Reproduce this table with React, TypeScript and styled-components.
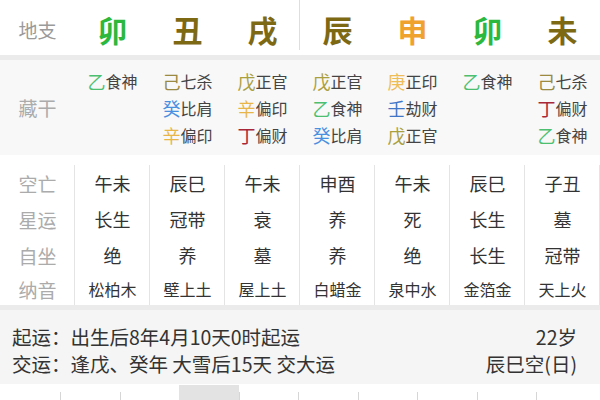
import React from 'react';
import styled, { createGlobalStyle } from 'styled-components';

const Global = createGlobalStyle`
  html, body { margin: 0; padding: 0; background: #fff; }
  body { font-family: "Noto Sans CJK SC", "Noto Sans", sans-serif; }
`;

const Page = styled.div`
  width: 600px;
  height: 400px;
  overflow: hidden;
  background: #fff;
  display: flex;
  flex-direction: column;
`;

const HeaderRow = styled.div`
  display: grid;
  grid-template-columns: repeat(8, 75px);
  height: 55px;
  background: #fff;
`;

const RowLabel = styled.div<{ $color?: string }>`
  display: flex;
  align-items: center;
  justify-content: center;
  font-size: 19px;
  color: ${(p) => p.$color || '#ababab'};
`;

const HeadLabel = styled(RowLabel)`
  padding-top: 4px;
`;

const Branch = styled.div<{ $color: string; $divider?: boolean }>`
  display: flex;
  align-items: center;
  justify-content: center;
  height: 50px;
  padding-top: 8px;
  box-sizing: border-box;
  font-size: 30px;
  font-weight: 700;
  line-height: 1;
  color: ${(p) => p.$color};
  box-shadow: ${(p) => (p.$divider ? 'inset -1px 0 0 #dedede' : 'none')};
`;

const Band = styled.div`
  height: 5px;
  background: #ebebeb;
  flex: none;
`;

const HiddenSection = styled.div`
  display: grid;
  grid-template-columns: repeat(8, 75px);
  background: #f8f8f8;
  padding: 7px 0;
`;

const StemCol = styled.div`
  display: flex;
  flex-direction: column;
  align-items: center;
  height: 81px;
`;

const Item = styled.div`
  height: 27px;
  display: flex;
  align-items: center;
  line-height: 1;
`;

const Stem = styled.span<{ $color: string }>`
  font-size: 18px;
  color: ${(p) => p.$color};
`;

const God = styled.span`
  font-size: 16px;
  color: #444;
`;

const MidSection = styled.div`
  background: #fff;
  padding-top: 10px;
`;

const MidRow = styled.div<{ $h: number }>`
  display: grid;
  grid-template-columns: repeat(8, 75px);
  height: ${(p) => p.$h}px;
`;

const MidLabel = styled.div`
  display: flex;
  align-items: center;
  justify-content: center;
  font-size: 19px;
  color: #ababab;
  box-shadow: inset -1px 0 0 #e4e4e4;
`;

const MidCell = styled.div<{ $small?: boolean }>`
  display: flex;
  align-items: center;
  justify-content: center;
  font-size: ${(p) => (p.$small ? '16px' : '18px')};
  color: #333;
  box-shadow: inset -1px 0 0 #e4e4e4;
`;

const Info = styled.div`
  background: #f5f5f5;
  padding: 13px 23px 7px 12px;
`;

const InfoLine = styled.div`
  height: 27px;
  display: flex;
  align-items: center;
  justify-content: space-between;
  font-size: 19.5px;
  color: #333;
`;

const Strip = styled.div`
  height: 16px;
  display: flex;
  align-items: flex-end;
  padding-left: 60px;
  background: #fff;
`;

const Tab = styled.div<{ $active?: boolean }>`
  width: 59.5px;
  flex: none;
  height: ${(p) => (p.$active ? '15px' : '8px')};
  background: ${(p) => (p.$active ? '#e3e3e3' : 'transparent')};
  border-left: 1px solid ${(p) => (p.$active ? '#e3e3e3' : '#d6d6d6')};
  box-sizing: border-box;
`;

const GREEN = '#2cb83c';
const EARTH = '#7d6914';
const ORANGE = '#f0a22e';

const branches = [
  { c: '卯', color: GREEN },
  { c: '丑', color: EARTH },
  { c: '戌', color: EARTH, divider: true },
  { c: '辰', color: EARTH },
  { c: '申', color: ORANGE },
  { c: '卯', color: GREEN },
  { c: '未', color: EARTH },
];

const SC: Record<string, string> = {
  乙: '#4cc070',
  己: '#9a8a42',
  戊: '#aba03e',
  癸: '#4a90e0',
  辛: '#e8b648',
  丁: '#a8283a',
  庚: '#efbd58',
  壬: '#4076c6',
};

const hidden: [string, string][][] = [
  [['乙', '食神']],
  [['己', '七杀'], ['癸', '比肩'], ['辛', '偏印']],
  [['戊', '正官'], ['辛', '偏印'], ['丁', '偏财']],
  [['戊', '正官'], ['乙', '食神'], ['癸', '比肩']],
  [['庚', '正印'], ['壬', '劫财'], ['戊', '正官']],
  [['乙', '食神']],
  [['己', '七杀'], ['丁', '偏财'], ['乙', '食神']],
];

const midRows: { label: string; values: string[]; small?: boolean; h: number }[] = [
  { label: '空亡', values: ['午未', '辰巳', '午未', '申酉', '午未', '辰巳', '子丑'], h: 36 },
  { label: '星运', values: ['长生', '冠带', '衰', '养', '死', '长生', '墓'], h: 36 },
  { label: '自坐', values: ['绝', '养', '墓', '养', '绝', '长生', '冠带'], h: 36 },
  { label: '纳音', values: ['松柏木', '壁上土', '屋上土', '白蜡金', '泉中水', '金箔金', '天上火'], small: true, h: 32 },
];

export default function App() {
  return (
    <Page>
      <Global />
      <HeaderRow>
        <HeadLabel $color="#9a9a9a">地支</HeadLabel>
        {branches.map((b, i) => (
          <Branch key={i} $color={b.color} $divider={b.divider}>
            {b.c}
          </Branch>
        ))}
      </HeaderRow>
      <Band />
      <HiddenSection>
        <RowLabel>藏干</RowLabel>
        {hidden.map((col, i) => (
          <StemCol key={i}>
            {col.map(([s, g], j) => (
              <Item key={j}>
                <Stem $color={SC[s]}>{s}</Stem>
                <God>{g}</God>
              </Item>
            ))}
          </StemCol>
        ))}
      </HiddenSection>
      <MidSection>
        {midRows.map((r) => (
          <MidRow key={r.label} $h={r.h}>
            <MidLabel>{r.label}</MidLabel>
            {r.values.map((v, i) => (
              <MidCell key={i} $small={r.small}>
                {v}
              </MidCell>
            ))}
          </MidRow>
        ))}
      </MidSection>
      <Band />
      <Info>
        <InfoLine>
          <span>起运：出生后8年4月10天0时起运</span>
          <span>22岁</span>
        </InfoLine>
        <InfoLine>
          <span>交运：逢戊、癸年 大雪后15天 交大运</span>
          <span>辰巳空(日)</span>
        </InfoLine>
      </Info>
      <Strip>
        {Array.from({ length: 9 }).map((_, i) => (
          <Tab key={i} $active={i === 2} />
        ))}
      </Strip>
    </Page>
  );
}
